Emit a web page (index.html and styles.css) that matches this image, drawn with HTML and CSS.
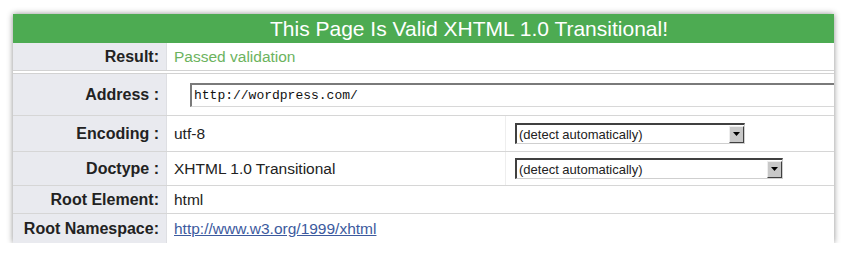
FILE: index.html
```html
<!DOCTYPE html>
<html lang="en">
<head>
    <meta charset="UTF-8">
    <title>Validation Result</title>
    <link rel="stylesheet" href="styles.css">
</head>
<body>
    <div class="panel">
        <div class="head"><span>This Page Is Valid XHTML 1.0 Transitional!</span></div>
        <div class="row r-result">
            <div class="label">Result:</div>
            <div class="val passed">Passed validation</div>
        </div>
        <div class="row r-address">
            <div class="label">Address :</div>
            <div class="val"><div class="addr">http://wordpress.com/</div></div>
        </div>
        <div class="row three r-encoding">
            <div class="label">Encoding :</div>
            <div class="val">utf-8</div>
            <div class="opt">
                <div class="select s1"><span>(detect automatically)</span><span class="arrow"><svg width="7" height="4" viewBox="0 0 7 4"><path d="M0 0h7L3.5 4z" fill="#000"/></svg></span></div>
            </div>
        </div>
        <div class="row three r-doctype">
            <div class="label">Doctype :</div>
            <div class="val">XHTML 1.0 Transitional</div>
            <div class="opt">
                <div class="select s2"><span>(detect automatically)</span><span class="arrow"><svg width="7" height="4" viewBox="0 0 7 4"><path d="M0 0h7L3.5 4z" fill="#000"/></svg></span></div>
            </div>
        </div>
        <div class="row r-root">
            <div class="label">Root Element:</div>
            <div class="val">html</div>
        </div>
        <div class="row r-ns last">
            <div class="label">Root Namespace:</div>
            <div class="val"><a href="#">http://www.w3.org/1999/xhtml</a></div>
        </div>
    </div>
</body>
</html>
```

FILE: styles.css
```css
* { margin: 0; padding: 0; box-sizing: border-box; }
body {
    background: #fff;
    font-family: "Liberation Sans", Arial, sans-serif;
    color: #222;
    padding: 14px 0 0 13px; }
.panel {
    width: 821px;
    background: #fff;
    overflow: hidden;
    box-shadow: 0 0 6px rgba(0, 0, 0, 0.45); }
.head {
    height: 29px;
    background: #4dab52; }
.head span {
    display: block;
    width: 912px;
    line-height: 29px;
    color: #fff;
    font-size: 21px;
    text-align: center; }
.row {
    display: grid;
    grid-template-columns: 154px 1fr;
    border-bottom: 1px solid #d6d6d6; }
.row.three { grid-template-columns: 154px 338px 1fr; }
.row.last { border-bottom: 0; }
.label {
    background: #e9eaef;
    border-right: 1px solid #dedfe3;
    font-weight: bold;
    font-size: 16px;
    text-align: right;
    padding-right: 7px;
    display: flex;
    align-items: center;
    justify-content: flex-end; }
.val {
    font-size: 15.5px;
    padding-left: 7px;
    display: flex;
    align-items: center; }
.opt {
    border-left: 1px solid #eeeeee;
    padding-left: 9px;
    display: flex;
    align-items: center; }
.r-result { height: 31px; border-bottom: 4px double #d2d2d2; }
.r-address { height: 42px; }
.r-encoding { height: 36px; }
.r-doctype { height: 34px; }
.r-root { height: 28px; }
.r-ns { height: 29px; }
.passed { color: #6cb35e; }
.val a { color: #3c5a9e; }
.addr {
    margin-left: 16px;
    width: 700px;
    height: 24px;
    border-top: 2px solid #7a7a7a;
    border-left: 2px solid #7a7a7a;
    border-bottom: 1px solid #d8d8d8;
    padding-left: 2px;
    font-family: "Liberation Mono", "Courier New", monospace;
    font-size: 13px;
    line-height: 21px;
    color: #111; }
.select {
    display: flex;
    align-items: center;
    justify-content: space-between;
    height: 21px;
    border-top: 2px solid #404040;
    border-left: 2px solid #404040;
    border-bottom: 1px solid #cfcfcf;
    border-right: 1px solid #cfcfcf;
    font-size: 13px;
    padding-left: 2px;
    background: #fff; }
.s1 { width: 230px; }
.s2 { width: 268px; }
.arrow {
    width: 15px;
    height: 17px;
    background: #c8c8c8;
    border: 1px solid #eee;
    border-right-color: #404040;
    border-bottom-color: #404040;
    display: flex;
    align-items: center;
    justify-content: center; }
```
